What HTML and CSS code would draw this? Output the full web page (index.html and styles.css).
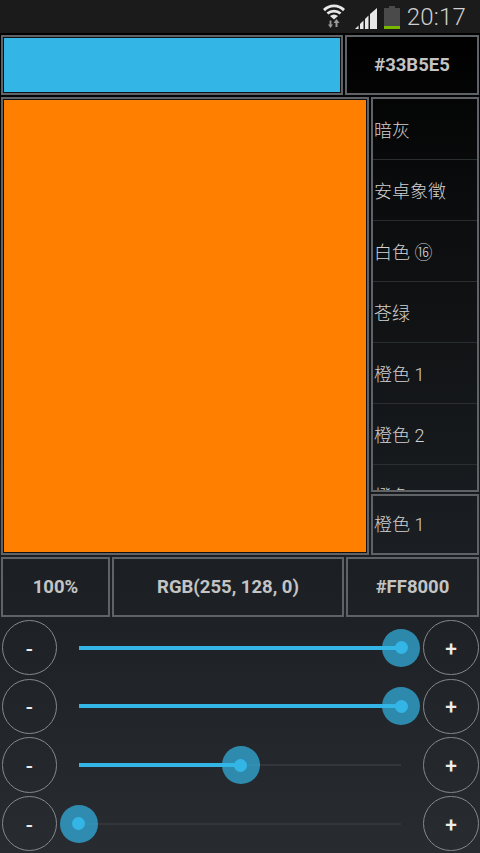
FILE: index.html
```html
<!DOCTYPE html>
<html lang="zh">
<head>
  <meta charset="UTF-8" />
  <meta name="viewport" content="width=device-width, initial-scale=1.0"/>
  <title>Color Picker</title>
  <link rel="stylesheet" href="styles.css">
</head>
<body>
  <div class="status-bar">
    <svg class="icon-wifi" width="24" height="24" viewBox="0 0 24 24">
      <path d="M1 5 A15.5 15.5 0 0 1 23 5 L21 7.2 A12.5 12.5 0 0 0 3 7.2 Z" fill="#e8e8e8"/>
      <path d="M4.5 8.6 A11 11 0 0 1 19.5 8.6 L17.6 10.6 A8.2 8.2 0 0 0 6.4 10.6 Z" fill="#e8e8e8"/>
      <path d="M8 12 A6 6 0 0 1 16 12 L12 15.6 Z" fill="#e8e8e8"/>
      <path d="M8.5 24 L6 20.5 H7.6 V16.5 H9.4 V20.5 H11 Z" fill="#9a9a9a"/>
      <path d="M14.5 15 L17.5 19 H15.5 V23 H13.5 V19 H11.5 Z" fill="#9a9a9a"/>
    </svg>
    <svg class="icon-signal" width="22" height="21" viewBox="0 0 22 21">
      <path d="M0 21 L3.5 17.5 V21 Z" fill="#e8e8e8"/>
      <path d="M5 21 V16 L8.5 12.5 V21 Z" fill="#e8e8e8"/>
      <path d="M10 21 V11 L13.5 7.5 V21 Z" fill="#e8e8e8"/>
      <path d="M15 21 V6 L22 0 V21 Z" fill="#e8e8e8"/>
    </svg>
    <svg class="icon-battery" width="16" height="23" viewBox="0 0 16 23">
      <rect x="5" y="0" width="6" height="2" fill="#4a4a4a"/>
      <rect x="0" y="2" width="16" height="21" fill="#4a4a4a"/>
      <rect x="0" y="20" width="16" height="3" fill="#7ab800"/>
    </svg>
    <span class="clock">20:17</span>
  </div>

  <div class="row row-top">
    <div class="box swatch-box"><div class="swatch swatch-blue"></div></div>
    <div class="box value">#33B5E5</div>
  </div>

  <div class="row row-main">
    <div class="box swatch-box"><div class="swatch swatch-orange"></div></div>
    <div class="side">
      <div class="box list">
        <div class="item">暗灰</div>
        <div class="item">安卓象徵</div>
        <div class="item">白色 ⑯</div>
        <div class="item">苍绿</div>
        <div class="item">橙色 1</div>
        <div class="item">橙色 2</div>
        <div class="item">橙色 3</div>
      </div>
      <div class="box selected">橙色 1</div>
    </div>
  </div>

  <div class="row row-values">
    <div class="box value">100%</div>
    <div class="box value">RGB(255, 128, 0)</div>
    <div class="box value">#FF8000</div>
  </div>

  <div class="sliders">
    <div class="slider-row">
      <div class="round">-</div>
      <div class="track"><div class="fill" style="width: 100%"><span class="thumb"></span></div></div>
      <div class="round">+</div>
    </div>
    <div class="slider-row">
      <div class="round">-</div>
      <div class="track"><div class="fill" style="width: 100%"><span class="thumb"></span></div></div>
      <div class="round">+</div>
    </div>
    <div class="slider-row">
      <div class="round">-</div>
      <div class="track"><div class="fill" style="width: 50.2%"><span class="thumb"></span></div></div>
      <div class="round">+</div>
    </div>
    <div class="slider-row">
      <div class="round">-</div>
      <div class="track"><div class="fill" style="width: 0%"><span class="thumb"></span></div></div>
      <div class="round">+</div>
    </div>
  </div>
</body>
</html>
```

FILE: styles.css
```css
* {
  box-sizing: border-box;
}

html, body {
  margin: 0;
  height: 853px;
  overflow: hidden;
}

body {
  width: 480px;
  background: linear-gradient(to bottom, #000 33px, #0b0c0d 200px, #1c2024 580px, #282c31 853px);
  color: #c8c8c8;
  font-family: Roboto, "Noto Sans CJK SC", sans-serif;
}

.status-bar {
  height: 33px;
  background: #1b1b1b;
  display: flex;
  align-items: center;
  justify-content: flex-end;
  padding-right: 14px;
}

.icon-wifi {
  margin-right: 9px;
  margin-top: -1px;
}

.icon-signal {
  margin-right: 7px;
  margin-top: 3px;
}

.icon-battery {
  margin-right: 7px;
  margin-top: 1px;
}

.clock {
  font-size: 24px;
  font-weight: 300;
  color: #d0d0d0;
  letter-spacing: 0.2px;
}

.row {
  display: flex;
  gap: 2px;
  padding: 0 1px;
  margin-top: 2px;
}

.box {
  border: 2px solid #5f6367;
}

.row-top {
  height: 60px;
}

.row-top .swatch-box {
  width: 342px;
}

.row-top .value {
  flex: 1;
}

.row-main {
  height: 458px;
}

.row-main .swatch-box {
  width: 368px;
}

.swatch {
  height: 100%;
  border: 1px solid #111;
}

.swatch-blue {
  background: #33b5e5;
}

.swatch-orange {
  background: #ff8000;
}

.value {
  display: flex;
  align-items: center;
  justify-content: center;
  font-size: 18.5px;
  font-weight: 700;
  color: #c4c4c4;
}

.side {
  flex: 1;
  display: flex;
  flex-direction: column;
  gap: 2px;
}

.list {
  height: 395px;
  overflow: hidden;
}

.item {
  height: 61px;
  display: flex;
  align-items: center;
  font-size: 18px;
  font-weight: 300;
  color: #d2d2d2;
  border-bottom: 1px solid #2b2e31;
  padding: 0 0 1px 1px;
}

.selected {
  flex: 1;
  display: flex;
  align-items: center;
  font-size: 18px;
  font-weight: 300;
  color: #d2d2d2;
  padding: 0 0 3px 1px;
}

.row-values {
  height: 60px;
}

.row-values .value:nth-child(1) {
  width: 109px;
}

.row-values .value:nth-child(2) {
  width: 232px;
}

.row-values .value:nth-child(3) {
  flex: 1;
}

.sliders {
  display: flex;
  flex-direction: column;
  gap: 3.3px;
  padding: 3px 1.3px 0 1.7px;
}

.slider-row {
  height: 55.4px;
  display: flex;
  align-items: center;
  justify-content: space-between;
}

.round {
  width: 55.4px;
  height: 55.4px;
  border: 1.5px solid #85888a;
  border-radius: 50%;
  display: flex;
  align-items: center;
  justify-content: center;
  font-size: 21px;
  font-weight: 500;
  color: #ececec;
  padding-top: 2px;
}

.track {
  flex: 1;
  height: 2px;
  margin: 0 22.3px 0 21.9px;
  background: #32363a;
}

.fill {
  position: relative;
  height: 4px;
  top: -1px;
  background: #33b5e5;
}

.thumb {
  position: absolute;
  right: -19px;
  top: -17px;
  width: 38px;
  height: 38px;
  border-radius: 50%;
  background: rgba(51, 181, 229, 0.7);
}

.thumb::after {
  content: "";
  position: absolute;
  left: 12.5px;
  top: 12.5px;
  width: 13px;
  height: 13px;
  border-radius: 50%;
  background: #33b5e5;
}
```
